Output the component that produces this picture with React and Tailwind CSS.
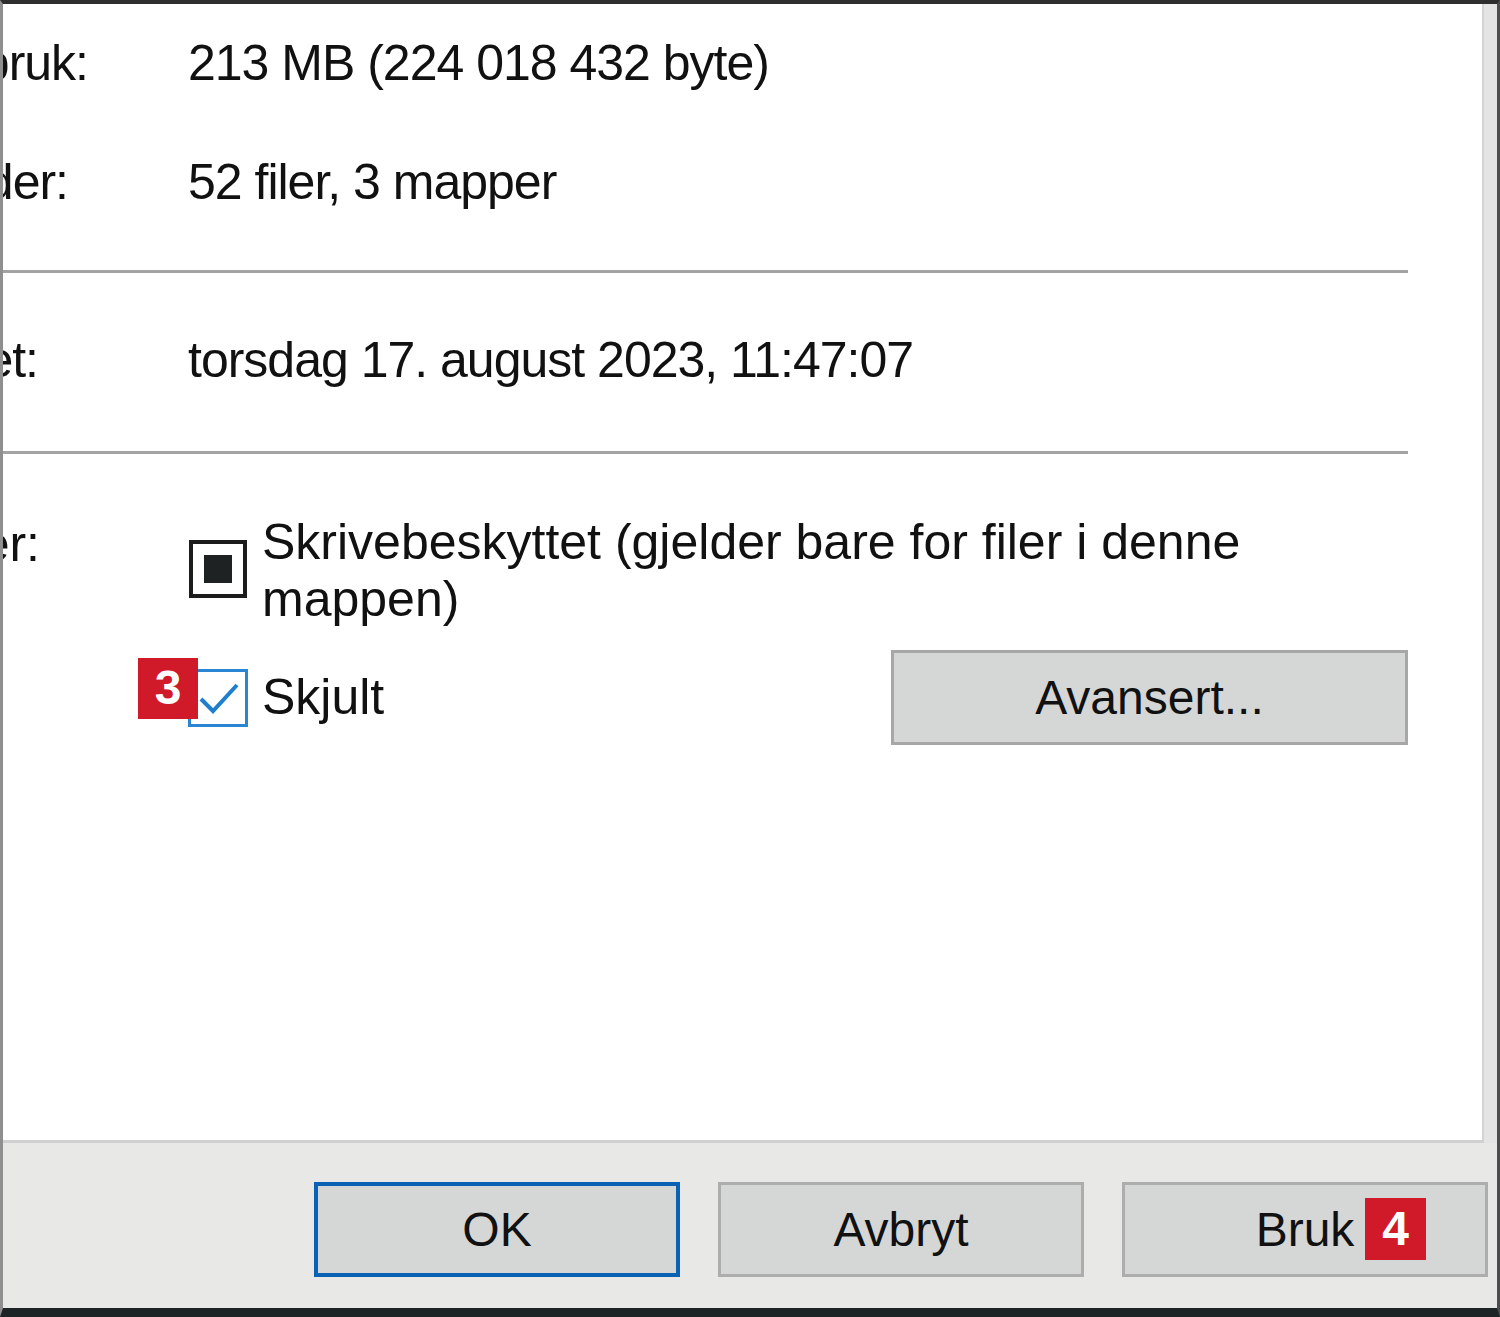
import React from "react";

const font = "font-['Liberation_Sans',Arial,sans-serif]";

function Badge({ n, className }) {
  return (
    <div className={`absolute flex items-center justify-center bg-[#d01a2a] text-white font-bold text-[48px] leading-none ${className}`}>
      {n}
    </div>
  );
}

function Row({ label, labelPad, h, children }) {
  return (
    <div className={`flex items-center ${h}`}>
      <div className={`w-[185px] shrink-0 flex justify-end overflow-hidden whitespace-nowrap ${labelPad}`}>
        <span className="shrink-0">{label}</span>
      </div>
      <div className="whitespace-nowrap">{children}</div>
    </div>
  );
}

function Button({ children, primary, badge }) {
  return (
    <div
      className={`relative w-[366px] h-[95px] flex items-center justify-center bg-[#d5d7d6] text-[48px] text-[#111] ${
        primary ? "border-[4px] border-[#0a62b4]" : "border-[3px] border-[#adadad]"
      }`}
    >
      {children}
      {badge && <Badge n={badge} className="left-[240px] top-[13px] w-[61px] h-[62px]" />}
    </div>
  );
}

export default function App() {
  return (
    <div
      className={`w-[1500px] h-[1317px] flex flex-col bg-[#e8e8e6] border-t-4 border-t-[#2e2e2e] border-l-[3px] border-l-[#8f8f8f] border-r-[3px] border-r-[#4d4d4d] border-b-[9px] border-b-[#1d2426] overflow-hidden text-[#111] ${font}`}
    >
      {/* tab page */}
      <div className="h-[1139px] flex bg-[#e4e4e4] shrink-0">
        <div className="w-[1481px] h-full bg-white border-r-2 border-r-[#d3d3d3] border-b-[3px] border-b-[#d0d0d0] text-[50px] tracking-[-1px]">
          <Row label="Diskbruk:" labelPad="pr-[100px]" h="h-[118px]">
            213 MB (224 018 432 byte)
          </Row>
          <Row label="Inneholder:" labelPad="pr-[120px]" h="h-[120px]">
            52 filer, 3 mapper
          </Row>
          <div className="mt-[28px] h-[3px] w-[1405px] bg-[#a3a3a3]" />
          <Row label="Opprettet:" labelPad="pr-[150px]" h="h-[174px]">
            torsdag 17. august 2023, 11:47:07
          </Row>
          <div className="mt-[4px] h-[3px] w-[1405px] bg-[#a3a3a3]" />

          {/* attributes */}
          <div className="mt-[60px] flex items-start leading-[57px] tracking-normal">
            <div className="w-[185px] shrink-0 flex justify-end overflow-hidden whitespace-nowrap pr-[148px] pt-[2px]">
              <span className="shrink-0">Attributter:</span>
            </div>
            <div className="ml-[1px] mt-[26px] w-[58px] h-[58px] shrink-0 border-[4px] border-[#1c1c1c] bg-white flex items-center justify-center">
              <div className="w-[28px] h-[28px] bg-[#1f2222]" />
            </div>
            <div className="ml-[15px] w-[1000px]">Skrivebeskyttet (gjelder bare for filer i denne mappen)</div>
          </div>

          <div className="mt-[22px] h-[95px] w-[1405px] flex items-center tracking-normal">
            <div className="w-[185px] shrink-0" />
            <div className="relative w-[60px] h-[58px] shrink-0 border-[3px] border-[#2a86d3] bg-white">
              <svg className="absolute inset-0" width="54" height="52" viewBox="0 0 54 52">
                <path d="M10 27 L22 39 L46 13" fill="none" stroke="#1f7fcf" strokeWidth="4" />
              </svg>
              <Badge n="3" className="left-[-53px] top-[-14px] w-[60px] h-[61px]" />
            </div>
            <div className="ml-[14px]">Skjult</div>
            <div className="ml-auto w-[517px] h-[95px] flex items-center justify-center bg-[#d5d7d6] border-[3px] border-[#a7a7a7] text-[48px]">
              Avansert...
            </div>
          </div>
        </div>
      </div>

      {/* bottom bar */}
      <div className="flex-1 flex justify-end items-start gap-[38px] pt-[39px] pr-[9px]">
        <Button primary>OK</Button>
        <Button>Avbryt</Button>
        <Button badge="4">Bruk</Button>
      </div>
    </div>
  );
}
